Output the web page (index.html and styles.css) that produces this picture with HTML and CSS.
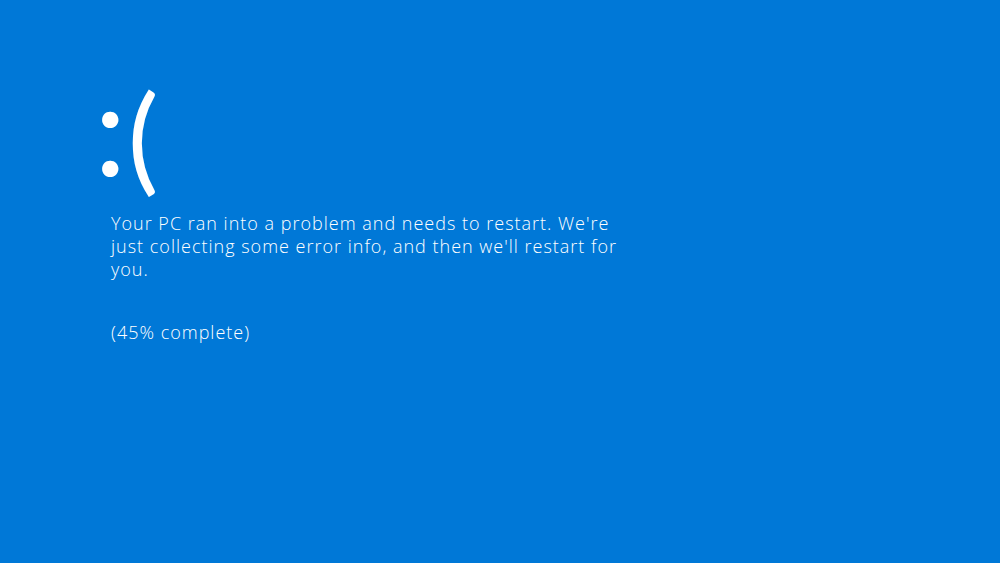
FILE: index.html
```html
<!DOCTYPE html>
<html lang="en">
<head>
<meta charset="utf-8">
<title>Your PC ran into a problem</title>
<link rel="stylesheet" href="styles.css">
</head>
<body>
<main class="screen">
  <div class="face"><span class="face-eyes">:</span><span class="face-mouth">(</span></div>
  <p class="message">Your PC ran into a problem and needs to restart. We're<br>just collecting some error info, and then we'll restart for<br>you.</p>
  <p class="progress">(45% complete)</p>
</main>
</body>
</html>
```
FILE: styles.css
```css
html, body {
  margin: 0;
  padding: 0;
  height: 100%;
}
body {
  background: #0078d7;
  color: #ffffff;
  font-family: "Open Sans", "Liberation Sans", sans-serif;
  overflow: hidden;
}
.screen {
  padding: 60px 0 0 94px;
  display: flex;
  flex-direction: column;
  align-items: flex-start;
}
.face {
  font-family: Lato, "Open Sans", sans-serif;
  font-weight: 400;
  font-size: 117px;
  line-height: 150px;
  height: 150px;
  letter-spacing: 3px;
}
.face-eyes {
  display: inline-block;
  font-size: 130px;
  line-height: 100px;
  letter-spacing: 1px;
  transform: translateY(-4px);
}
.message {
  margin: 2px 0 0 17px;
  font-size: 18px;
  font-weight: 300;
  line-height: 23px;
  letter-spacing: 1px;
  white-space: nowrap;
}
.progress {
  margin: 40px 0 0 17px;
  font-size: 18px;
  font-weight: 300;
  line-height: 23px;
  letter-spacing: 1px;
}
```
